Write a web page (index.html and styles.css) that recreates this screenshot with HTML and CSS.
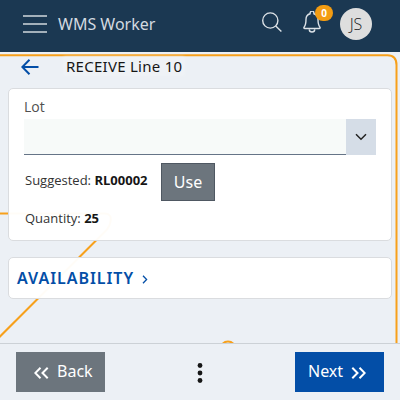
FILE: index.html
```
<!DOCTYPE html>
<html lang="en">
<head>
<meta charset="utf-8">
<title>WMS Worker</title>
<link rel="stylesheet" href="styles.css">
</head>
<body>
<div class="app">
  <header class="topbar">
    <svg class="menu" width="24" height="20" viewBox="0 0 24 20"><path d="M0 2h24M0 10h24M0 18h24"/></svg>
    <span class="brand">WMS Worker</span>
    <svg class="search" width="20" height="21" viewBox="0 0 20 21"><circle cx="8.3" cy="8.5" r="7.6"/><path d="M13.7 14L19.4 19.6"/></svg>
    <div class="alerts">
      <svg width="18" height="22" viewBox="0 0 18 22"><path d="M7.1 2.8V2a1.9 1.9 0 0 1 3.8 0v.8C13.5 3.5 15 5.600 15 8.300c0 4 .3 5.700 1.700 7.500q1.200 1.700-.7 1.700H2q-1.900 0-.7-1.700C2.700 14 3 12.300 3 8.300 3 5.600 4.500 3.500 7.100 2.800zM6.300 18.500a2.700 2.500 0 0 0 5.400 0"/></svg>
      <span class="badge">0</span>
    </div>
    <span class="avatar">JS</span>
  </header>
  <main class="content">
    <svg class="backdrop" width="400" height="291" viewBox="0 52 400 291"><path d="M-4 55.200H387.500Q396.500 55.200 396.500 65V345M-4 213.500H105Q112 214 110.500 221.500Q110 226 107 229.500L-4 340.500"/><circle cx="228" cy="349" r="7.500"/></svg>
    <div class="title-row">
      <svg width="18" height="16" viewBox="0 0 18 16"><path d="M17.500 8H1.500M8.500 .8L1.300 8L8.500 15.200"/></svg>
      <h1>RECEIVE Line 10</h1>
    </div>
    <section class="card form">
      <label class="lot">Lot</label>
      <div class="select">
        <div class="field"></div>
        <div class="toggle"><svg width="12" height="8" viewBox="0 0 12 8"><path d="M1 1.200L6 6.200L11 1.200"/></svg></div>
      </div>
      <div class="suggest"><span class="info sug">Suggested: <b>RL00002</b></span><button class="use"><span>Use</span></button></div>
      <div class="info qty">Quantity: <b>25</b></div>
    </section>
    <section class="card availability">
      <span class="avail-label">AVAILABILITY</span>
      <svg width="6" height="9" viewBox="0 0 6 9"><path d="M1 .8L4.600 4.500L1 8.200"/></svg>
    </section>
  </main>
  <footer class="actions">
    <button class="btn back"><svg width="15" height="12" viewBox="0 0 15 12"><path d="M6.500 .8L1.300 6L6.500 11.200M13.700 .8L8.500 6L13.700 11.200"/></svg><span>Back</span></button>
    <svg class="more" width="6" height="20" viewBox="0 0 6 20"><circle cx="3" cy="2.500" r="2.400"/><circle cx="3" cy="10" r="2.400"/><circle cx="3" cy="17.500" r="2.400"/></svg>
    <button class="btn next"><span>Next</span><svg width="15" height="12" viewBox="0 0 15 12"><path d="M1.300 .8L6.500 6L1.300 11.200M8.500 .8L13.700 6L8.500 11.200"/></svg></button>
  </footer>
</div>
</body>
</html>
```
FILE: styles.css
```
* { box-sizing: border-box; }
body { margin: 0; font-family: "Noto Sans", "Open Sans", sans-serif; color: #161616; background: #ecf0f5; }
svg { display: block; fill: none; flex: none; }
button { font: inherit; color: #fff; margin: 0; padding: 0; }
.app { width: 400px; height: 400px; display: flex; flex-direction: column; overflow: hidden; }
.topbar { height: 52px; flex: none; display: flex; align-items: flex-start; background: #1b3852; padding-left: 23px; }
.menu { margin-top: 14px; stroke: #a3b0ba; stroke-width: 1.8; }
.brand { width: 204px; margin: 13px 0 0 11px; font-size: 16px; line-height: 22px; color: #d3dae0; white-space: nowrap; }
.search { margin-top: 12px; stroke: #dce2e7; stroke-width: 1.4; }
.alerts { position: relative; margin: 11px 0 0 21px; stroke: #dce2e7; stroke-width: 1.4; }
.badge { position: absolute; left: 12px; top: -6px; width: 18px; height: 16px; border-radius: 8px; background: #f39c12; color: #fff; font: bold 10px/16px "Noto Sans", sans-serif; text-align: center; }
.avatar { width: 32px; height: 32px; margin: 8px 0 0 19px; border-radius: 50%; background: #dedede; color: #222; font: 300 16px/33px "Open Sans", sans-serif; text-align: center; }
.content { position: relative; height: 291px; flex: none; padding: 0 8px; }
.backdrop { position: absolute; left: 0; top: 0; stroke: #f7a01b; stroke-width: 2; }
.title-row { position: relative; height: 36px; display: flex; align-items: flex-start; padding-left: 13px; }
.title-row svg { margin-top: 7px; stroke: #034ea7; stroke-width: 2; }
h1 { margin: 5px 0 0 25px; padding: 0 2px; font-size: 15px; font-weight: 400; line-height: 18px; letter-spacing: .27px; background: #eff2f6; box-shadow: 0 0 3px #f1f4f7; }
.card { position: relative; width: 384px; border: 1px solid #dadcdf; border-radius: 5px; background: rgba(255,255,255,.97); }
.form { height: 153px; padding: 8px 15px; }
.lot { display: block; height: 22px; font: 14px/19px "Open Sans", sans-serif; color: #505050; }
.select { display: flex; height: 36px; }
.field { width: 322px; background: #f7faf9; border-bottom: 1px solid #657487; }
.toggle { width: 30px; background: #d5dde7; display: grid; place-items: center; }
.toggle svg { stroke: #222; stroke-width: 1.5; }
.suggest { display: flex; height: 46px; align-items: flex-start; padding-top: 8px; }
.info { padding-left: 1px; font: 13px/18px "Open Sans", sans-serif; color: #333; white-space: nowrap; }
.info b { font-weight: 700; color: #161616; }
.sug { width: 137px; margin-top: 8px; }
.use { width: 54px; height: 38px; background: #6c757d; border: 1px solid #4f5862; font-size: 16px; line-height: 36px; }
.qty { margin-top: 8px; }
.availability { height: 42px; margin-top: 16px; padding-left: 8px; display: flex; align-items: center; color: #034ea7; }
.avail-label { width: 125px; font-size: 16px; font-weight: 600; line-height: 22px; letter-spacing: .95px; white-space: nowrap; }
.availability svg { margin-top: 3px; stroke: #034ea7; stroke-width: 1.3; }
.actions { height: 57px; flex: none; position: relative; border-top: 1px solid #ccd1d6; background: #ecf0f5; display: flex; justify-content: space-between; padding: 8px 16px 0; }
.btn { width: 89px; height: 40px; border: 0; display: flex; align-items: center; font-size: 16px; }
.btn svg { stroke: #fff; stroke-width: 2; margin-top: 2px; }
.btn span { line-height: 22px; margin-top: -2px; }
.back { background: #6c757d; padding-left: 18px; gap: 8px; }
.next { background: #034ea7; padding-left: 13px; gap: 8px; }
.more { fill: #161616; margin-top: 11px; }
```
